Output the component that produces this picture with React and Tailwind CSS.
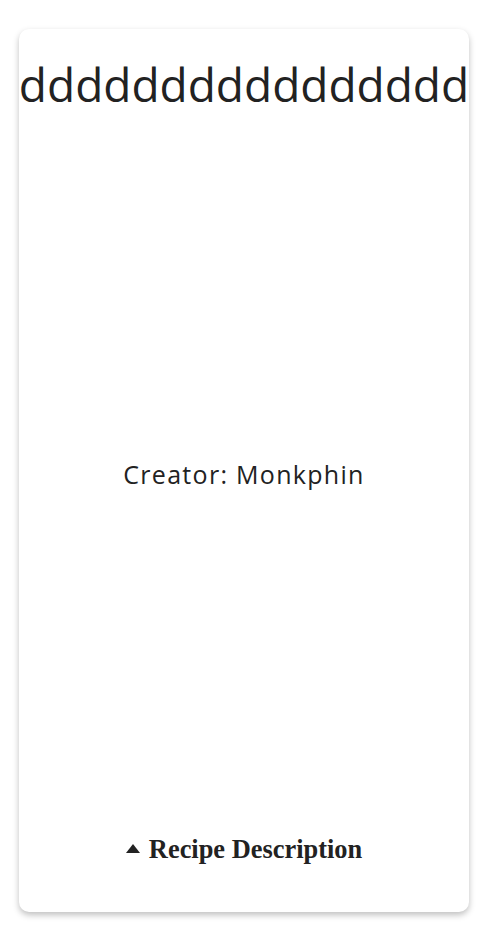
export default function App() {
  return (
    <div className="min-h-screen bg-white pt-[29px] pl-[19px]">
      <div className="flex h-[883px] w-[450px] flex-col items-center justify-between overflow-hidden rounded-[10px] bg-white pt-[21px] pb-[42px] shadow-[0_3px_6px_rgba(0,0,0,0.25)]">
        <h1 className="whitespace-nowrap text-[46px] font-normal text-[#222] [font-family:'Open_Sans',sans-serif]">
          dddddddddddddddd
        </h1>
        <p className="text-[25px] tracking-[1.3px] text-[#222] [font-family:'Open_Sans',sans-serif]">
          Creator: Monkphin
        </p>
        <div className="flex items-center gap-[9px] text-[26.4px] font-bold text-[#222] [font-family:'Liberation_Serif',serif]">
          <svg width="14" height="9" viewBox="0 0 14 9" className="mb-[3px]">
            <path d="M7 0 L14 9 L0 9 Z" fill="#222" />
          </svg>
          <span>Recipe Description</span>
        </div>
      </div>
    </div>
  );
}
